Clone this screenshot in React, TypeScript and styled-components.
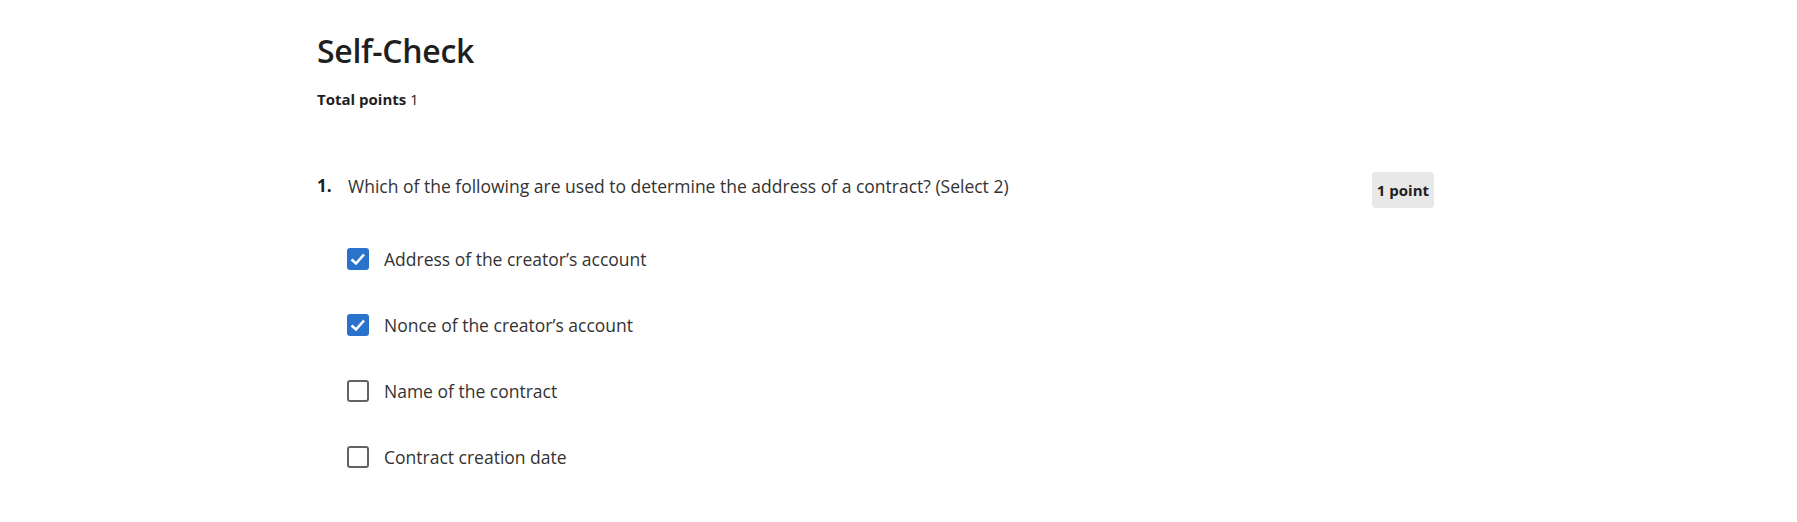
import React, { useState } from 'react';
import styled, { createGlobalStyle } from 'styled-components';

const GlobalStyle = createGlobalStyle`
  html, body {
    margin: 0;
    padding: 0;
    background: #ffffff;
  }
  body {
    font-family: "Open Sans", "Noto Sans", "Liberation Sans", sans-serif;
    color: #1f1f1f;
  }
`;

const StyledPage = styled.div`
  width: 1117px;
  padding: 29px 0 0 317px;
`;

const StyledTitle = styled.h1`
  margin: 0;
  font-size: 32px;
  line-height: 44px;
  font-weight: 600;
  letter-spacing: -0.3px;
  color: #1f1f1f;
`;

const StyledTotal = styled.p`
  margin: 16px 0 0;
  font-size: 15px;
  line-height: 20px;
  color: #1f1f1f;
  & strong {
    font-weight: 700;
  }
`;

const StyledQuestion = styled.div`
  display: flex;
  align-items: flex-start;
  margin-top: 63px;
`;

const StyledNumber = styled.span`
  width: 31px;
  flex: none;
  font-size: 17px;
  line-height: 28px;
  font-weight: 700;
`;

const StyledPrompt = styled.p`
  flex: 1;
  margin: 0;
  font-size: 17.5px;
  line-height: 28px;
  color: #333333;
`;

const StyledBadge = styled.span`
  flex: none;
  margin-top: 0;
  padding: 0 5px;
  height: 36px;
  line-height: 36px;
  border-radius: 4px;
  background-color: #e8e8e8;
  font-size: 15px;
  font-weight: 700;
  color: #1f1f1f;
`;

const StyledOptions = styled.ul`
  list-style: none;
  margin: 39px 0 0 30px;
  padding: 0;
  display: flex;
  flex-direction: column;
  gap: 42px;
`;

const StyledOption = styled.li`
  display: flex;
  align-items: center;
  gap: 15px;
  cursor: pointer;
`;

type StyledBoxProps = { $checked: boolean };
const StyledBox = styled.span<StyledBoxProps>`
  width: 22px;
  height: 22px;
  box-sizing: border-box;
  border-radius: 3px;
  border: ${({ $checked }) => ($checked ? 'none' : 'solid 2px #636363')};
  background-color: ${({ $checked }) => ($checked ? '#2a73cc' : '#ffffff')};
  display: flex;
  align-items: center;
  justify-content: center;
  flex: none;
`;

const StyledLabel = styled.span`
  font-size: 17.5px;
  line-height: 24px;
  color: #333333;
`;

const OPTIONS = [
  'Address of the creator’s account',
  'Nonce of the creator’s account',
  'Name of the contract',
  'Contract creation date',
];

const App: React.FC = () => {
  const [selected, setSelected] = useState<number[]>([0, 1]);
  const toggle = (i: number) =>
    setSelected((s) => (s.includes(i) ? s.filter((x) => x !== i) : [...s, i]));
  return (
    <>
      <GlobalStyle />
      <StyledPage>
        <StyledTitle>Self-Check</StyledTitle>
        <StyledTotal>
          <strong>Total points</strong> 1
        </StyledTotal>
        <StyledQuestion>
          <StyledNumber>1.</StyledNumber>
          <StyledPrompt>
            Which of the following are used to determine the address of a
            contract? (Select 2)
          </StyledPrompt>
          <StyledBadge>1 point</StyledBadge>
        </StyledQuestion>
        <StyledOptions>
          {OPTIONS.map((opt, i) => {
            const checked = selected.includes(i);
            return (
              <StyledOption key={opt} onClick={() => toggle(i)}>
                <StyledBox $checked={checked}>
                  {checked && (
                    <svg width="18" height="18" viewBox="0 0 18 18">
                      <path
                        d="M2.5 9.5 L7 13.5 L15 4.5"
                        fill="none"
                        stroke="#ffffff"
                        strokeWidth="2.6"
                      />
                    </svg>
                  )}
                </StyledBox>
                <StyledLabel>{opt}</StyledLabel>
              </StyledOption>
            );
          })}
        </StyledOptions>
      </StyledPage>
    </>
  );
};

export default App;
